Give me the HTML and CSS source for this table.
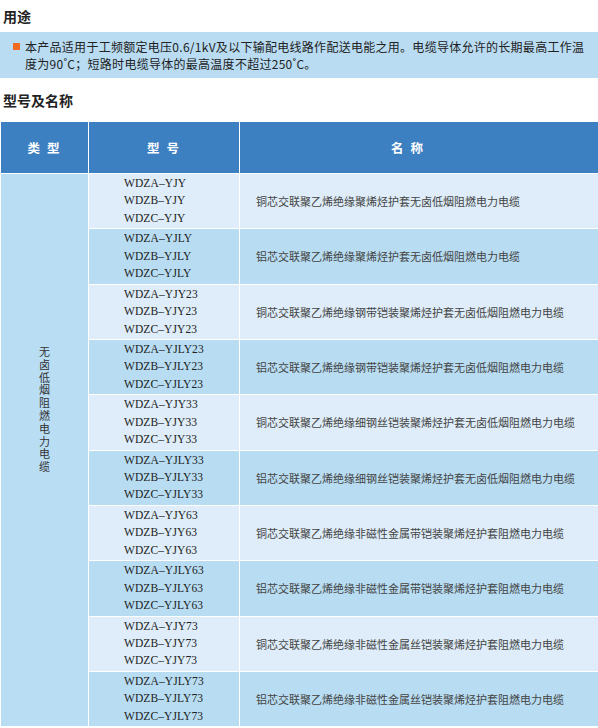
FILE: index.html
```html
<!DOCTYPE html>
<html lang="zh">
<head>
<meta charset="utf-8">
<title>用途 / 型号及名称</title>
<link rel="stylesheet" href="styles.css">
</head>
<body>
<h2 class="section-title">用途</h2>
<div class="intro">
  <span class="bullet"></span>
  <p class="intro-text">本产品适用于工频额定电压0.6/1kV及以下输配电线路作配送电能之用。电缆导体允许的长期最高工作温度为90˚C；短路时电缆导体的最高温度不超过250˚C。</p>
</div>
<h2 class="section-title second">型号及名称</h2>
<table class="spec">
  <colgroup>
    <col class="c-type">
    <col class="c-model">
    <col class="c-name">
  </colgroup>
  <thead>
    <tr>
      <th>类 型</th>
      <th>型 号</th>
      <th class="th-name">名 称</th>
    </tr>
  </thead>
  <tbody>
    <tr class="light">
      <td class="type" rowspan="10"><span class="vtext">无卤低烟阻燃电力电缆</span></td>
      <td class="model">WDZA–YJY<br>WDZB–YJY<br>WDZC–YJY</td>
      <td class="name">铜芯交联聚乙烯绝缘聚烯烃护套无卤低烟阻燃电力电缆</td>
    </tr>
    <tr class="dark">
      <td class="model">WDZA–YJLY<br>WDZB–YJLY<br>WDZC–YJLY</td>
      <td class="name">铝芯交联聚乙烯绝缘聚烯烃护套无卤低烟阻燃电力电缆</td>
    </tr>
    <tr class="light">
      <td class="model">WDZA–YJY23<br>WDZB–YJY23<br>WDZC–YJY23</td>
      <td class="name">铜芯交联聚乙烯绝缘钢带铠装聚烯烃护套无卤低烟阻燃电力电缆</td>
    </tr>
    <tr class="dark">
      <td class="model">WDZA–YJLY23<br>WDZB–YJLY23<br>WDZC–YJLY23</td>
      <td class="name">铝芯交联聚乙烯绝缘钢带铠装聚烯烃护套无卤低烟阻燃电力电缆</td>
    </tr>
    <tr class="light">
      <td class="model">WDZA–YJY33<br>WDZB–YJY33<br>WDZC–YJY33</td>
      <td class="name">铜芯交联聚乙烯绝缘细钢丝铠装聚烯烃护套无卤低烟阻燃电力电缆</td>
    </tr>
    <tr class="dark">
      <td class="model">WDZA–YJLY33<br>WDZB–YJLY33<br>WDZC–YJLY33</td>
      <td class="name">铝芯交联聚乙烯绝缘细钢丝铠装聚烯烃护套无卤低烟阻燃电力电缆</td>
    </tr>
    <tr class="light">
      <td class="model">WDZA–YJY63<br>WDZB–YJY63<br>WDZC–YJY63</td>
      <td class="name">铜芯交联聚乙烯绝缘非磁性金属带铠装聚烯烃护套阻燃电力电缆</td>
    </tr>
    <tr class="dark">
      <td class="model">WDZA–YJLY63<br>WDZB–YJLY63<br>WDZC–YJLY63</td>
      <td class="name">铝芯交联聚乙烯绝缘非磁性金属带铠装聚烯烃护套阻燃电力电缆</td>
    </tr>
    <tr class="light">
      <td class="model">WDZA–YJY73<br>WDZB–YJY73<br>WDZC–YJY73</td>
      <td class="name">铜芯交联聚乙烯绝缘非磁性金属丝铠装聚烯烃护套阻燃电力电缆</td>
    </tr>
    <tr class="dark">
      <td class="model">WDZA–YJLY73<br>WDZB–YJLY73<br>WDZC–YJLY73</td>
      <td class="name">铝芯交联聚乙烯绝缘非磁性金属丝铠装聚烯烃护套阻燃电力电缆</td>
    </tr>
  </tbody>
</table>
</body>
</html>
```
FILE: styles.css
```css
html, body {
  margin: 0;
  padding: 0;
  background: #ffffff;
}
body {
  font-family: "Noto Sans CJK SC", "Noto Sans", sans-serif;
  color: #222;
}
.section-title {
  margin: 0;
  padding: 8px 3px 0;
  font-size: 14px;
  line-height: 16px;
  font-weight: bold;
  color: #222;
}
.section-title.second {
  padding-top: 14px;
}
.intro {
  display: flex;
  align-items: flex-start;
  margin-top: 8px;
  background: #b9dcf2;
  padding: 6px 6px 6px 13px;
}
.bullet {
  flex: none;
  width: 7px;
  height: 7px;
  margin-top: 5px;
  margin-right: 5px;
  background: #f06a22;
}
.intro-text {
  margin: 0;
  font-size: 12px;
  line-height: 17px;
  letter-spacing: 0.28px;
  color: #222;
}
.spec {
  margin-top: 13px;
  width: 598px;
  border-collapse: collapse;
  table-layout: fixed;
  border-top: 1px solid #dde6ee;
}
.c-type { width: 88px; }
.c-model { width: 151px; }
.c-name { width: 359px; }
.spec th, .spec td {
  border: 1px solid #ffffff;
}
.spec th {
  background: #3d80c2;
  color: #ffffff;
  font-size: 12.5px;
  font-weight: bold;
  letter-spacing: 2px;
  height: 51px;
  padding: 0;
  text-align: center;
  vertical-align: middle;
}
.spec th.th-name {
  padding-right: 22px;
}
.spec td {
  padding: 1px 0;
  vertical-align: middle;
}
.light td { background: #deedf9; }
.dark td { background: #b8ddf3; }
.spec td.type {
  background: #b9ddf3;
  vertical-align: top;
  text-align: center;
  padding-top: 171px;
}
.vtext {
  display: inline-block;
  width: 12px;
  font-size: 11px;
  line-height: 12.8px;
  color: #333;
  word-break: break-all;
}
.model {
  font-family: "Liberation Serif", "Times New Roman", serif;
  font-size: 11.5px;
  line-height: 17.43px;
  letter-spacing: 0.1px;
  color: #222;
  padding-left: 35px !important;
}
.name {
  font-size: 11px;
  color: #444;
  padding-left: 16px !important;
  white-space: nowrap;
}
```
